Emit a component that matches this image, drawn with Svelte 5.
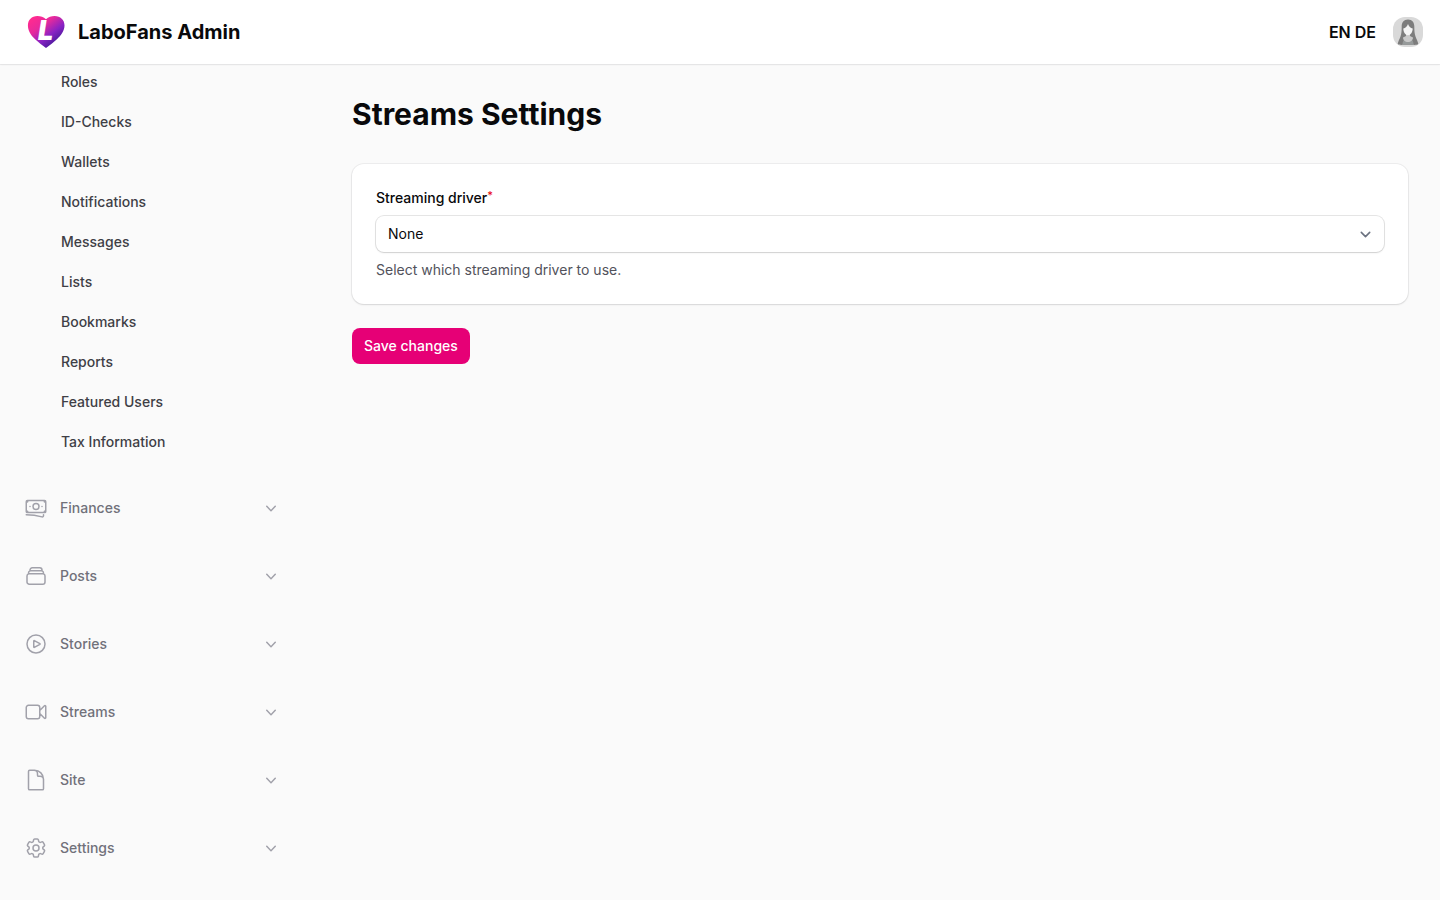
<script>
	let driver = $state('none');

	const userLinks = [
		'Roles',
		'ID-Checks',
		'Wallets',
		'Notifications',
		'Messages',
		'Lists',
		'Bookmarks',
		'Reports',
		'Featured Users',
		'Tax Information'
	];

	// outline icons on a 24x24 grid
	const groups = [
		{
			label: 'Finances',
			icon: 'M2.25 18.75a60.07 60.07 0 0 1 15.797 2.101c.727.198 1.453-.342 1.453-1.096V18.75M3.75 4.5v.75A.75.75 0 0 1 3 6h-.75m0 0v-.375c0-.621.504-1.125 1.125-1.125H20.25M2.25 6v9m18-10.5v.75c0 .414.336.75.75.75h.75m-1.5-1.5h.375c.621 0 1.125.504 1.125 1.125v9.75c0 .621-.504 1.125-1.125 1.125h-.375m1.5-1.5H21a.75.75 0 0 0-.75.75v.75m0 0H3.75m0 0h-.375a1.125 1.125 0 0 1-1.125-1.125V15m1.5 1.5v-.75A.75.75 0 0 0 3 15h-.75M15 10.5a3 3 0 1 1-6 0 3 3 0 0 1 6 0Zm3 0h.008v.008H18V10.5Zm-12 0h.008v.008H6V10.5Z'
		},
		{
			label: 'Posts',
			icon: 'M6 6.878V6a2.25 2.25 0 0 1 2.25-2.25h7.5A2.25 2.25 0 0 1 18 6v.878m-12 0c.235-.083.487-.128.75-.128h10.5c.263 0 .515.045.75.128m-12 0A2.25 2.25 0 0 0 4.5 9v.878m13.5-3A2.25 2.25 0 0 1 19.5 9v.878m0 0a2.246 2.246 0 0 0-.75-.128H5.25c-.263 0-.515.045-.75.128m15 0A2.25 2.25 0 0 1 21 12v6a2.25 2.25 0 0 1-2.25 2.25H5.25A2.25 2.25 0 0 1 3 18v-6c0-.98.626-1.813 1.5-2.122'
		},
		{
			label: 'Stories',
			icon: 'M21 12a9 9 0 1 1-18 0 9 9 0 0 1 18 0Z M15.91 11.672a.375.375 0 0 1 0 .656l-5.603 3.113a.375.375 0 0 1-.557-.328V8.887c0-.286.307-.466.557-.327l5.603 3.112Z'
		},
		{
			label: 'Streams',
			icon: 'm15.75 10.5 4.72-4.72a.75.75 0 0 1 1.28.53v11.38a.75.75 0 0 1-1.28.53l-4.72-4.72M4.5 18.75h9a2.25 2.25 0 0 0 2.25-2.25v-9a2.25 2.25 0 0 0-2.25-2.25h-9A2.25 2.25 0 0 0 2.25 7.5v9a2.25 2.25 0 0 0 2.25 2.25Z'
		},
		{
			label: 'Site',
			icon: 'M19.5 14.25v-2.625a3.375 3.375 0 0 0-3.375-3.375h-1.5A1.125 1.125 0 0 1 13.5 7.125v-1.5a3.375 3.375 0 0 0-3.375-3.375H8.25m2.25 0H5.625c-.621 0-1.125.504-1.125 1.125v17.25c0 .621.504 1.125 1.125 1.125h12.75c.621 0 1.125-.504 1.125-1.125V11.25a9 9 0 0 0-9-9Z'
		},
		{
			label: 'Settings',
			icon: 'M9.594 3.94c.09-.542.56-.94 1.11-.94h2.593c.55 0 1.02.398 1.11.94l.213 1.281c.063.374.313.686.645.87.074.04.147.083.22.127.325.196.72.257 1.075.124l1.217-.456a1.125 1.125 0 0 1 1.37.49l1.296 2.247a1.125 1.125 0 0 1-.26 1.431l-1.003.827c-.293.241-.438.613-.43.992a7.723 7.723 0 0 1 0 .255c-.008.378.137.75.43.991l1.004.827c.424.35.534.955.26 1.43l-1.298 2.247a1.125 1.125 0 0 1-1.369.491l-1.217-.456c-.355-.133-.75-.072-1.076.124a6.47 6.47 0 0 1-.22.128c-.331.183-.581.495-.644.869l-.213 1.281c-.09.543-.56.94-1.11.94h-2.594c-.55 0-1.019-.398-1.11-.94l-.213-1.281c-.062-.374-.312-.686-.644-.87a6.52 6.52 0 0 1-.22-.127c-.325-.196-.72-.257-1.076-.124l-1.217.456a1.125 1.125 0 0 1-1.369-.49l-1.297-2.247a1.125 1.125 0 0 1 .26-1.431l1.004-.827c.292-.24.437-.613.43-.991a6.932 6.932 0 0 1 0-.255c.007-.38-.138-.751-.43-.992l-1.004-.827a1.125 1.125 0 0 1-.26-1.43l1.297-2.247a1.125 1.125 0 0 1 1.37-.491l1.216.456c.356.133.751.072 1.076-.124.072-.044.146-.086.22-.128.332-.183.582-.495.644-.869l.214-1.28Z M15 12a3 3 0 1 1-6 0 3 3 0 0 1 6 0Z'
		}
	];
</script>

<header class="topbar">
	<a class="brand" href="#home">
		<svg class="logo" viewBox="0 0 38 34" aria-hidden="true">
			<defs>
				<linearGradient id="heart" x1="0.1" y1="0.1" x2="0.75" y2="0.85">
					<stop offset="0" stop-color="#ff2a90" />
					<stop offset="0.35" stop-color="#e62a9c" />
					<stop offset="0.7" stop-color="#8a22c4" />
					<stop offset="1" stop-color="#4a1a9c" />
				</linearGradient>
			</defs>
			<path
				fill="url(#heart)"
				d="M19 4.2C16.6 1.6 13.6.9 10.4.9 4.6.9.9 4.8.9 10.3c0 5.2 2.5 9.6 7.2 14 3.3 3 7 5.9 10.9 8.7 3.9-2.8 7.6-5.7 10.9-8.7 4.7-4.4 7.6-8.8 7.6-14C37.5 4.8 33.4.9 27.6.9 24.4.9 21.4 1.6 19 4.2Z"
			/>
			<text class="logo-letter" x="11" y="25">L</text>
		</svg>
		<span>LaboFans Admin</span>
	</a>
	<div class="user-area">
		<nav class="languages" aria-label="Language">
			<a href="#en">EN</a>
			<a href="#de">DE</a>
		</nav>
		<button class="avatar" type="button" aria-label="User menu">
			<svg viewBox="0 0 32 32" aria-hidden="true">
				<rect x="1" y="1" width="30" height="30" rx="12" fill="#d9d9d9" />
				<path
					fill="#7d7d7d"
					d="M16 3.5c-4.3 0-6.3 3-6.3 7 0 4-.2 7-1.2 10-1 2.6-2.4 5-2.8 7.5 1.2.9 3.4 1.1 5.3.8h10c1.9.3 4.1.1 5.3-.8-.4-2.5-1.8-4.9-2.8-7.5-1-3-1.2-6-1.2-10 0-4-2-7-6.3-7Z"
				/>
				<path fill="#969a9a" d="M10.5 28.8c0-3 1-5.8 3.5-6.5h4c2.5.7 3.5 3.5 3.5 6.5Z" />
				<path fill="#c9c9c9" d="M14 18h4v2l3 1.5c0 2.6-2.1 4.5-5 4.500s-5-1.900-5-4.500l3-1.500Z" />
				<path
					fill="#f4f4f4"
					d="M11.300 12.500c2.300-.5 3.700-2 4.700-4.500 1 2.500 2.400 4 4.700 4.500 0 3.600-2.100 6.700-4.700 6.700s-4.700-3.100-4.700-6.700Z"
				/>
			</svg>
		</button>
	</div>
</header>

<div class="layout">
	<aside class="sidebar">
		<ul class="links">
			{#each userLinks as link}
				<li><a href="#{link.toLowerCase().replace(' ', '-')}">{link}</a></li>
			{/each}
		</ul>
		{#each groups as group}
			<button class="group" type="button" aria-expanded="false">
				<svg class="group-icon" viewBox="0 0 24 24" aria-hidden="true">
					<path d={group.icon} />
				</svg>
				<span>{group.label}</span>
				<svg class="chevron" viewBox="0 0 20 20" aria-hidden="true">
					<path
						d="M5.23 7.71a.75.75 0 0 1 1.06.02L10 11.668l3.71-3.938a.75.75 0 1 1 1.08 1.04l-4.25 4.5a.75.75 0 0 1-1.08 0l-4.25-4.5a.75.75 0 0 1 .02-1.06Z"
					/>
				</svg>
			</button>
		{/each}
	</aside>

	<main>
		<h1>Streams Settings</h1>
		<form onsubmit={(event) => event.preventDefault()}>
			<section class="card">
				<label for="driver">Streaming driver<sup>*</sup></label>
				<div class="select-wrap">
					<select id="driver" bind:value={driver} aria-describedby="driver-help" required>
						<option value="none">None</option>
					</select>
					<svg class="select-arrow" viewBox="0 0 20 20" aria-hidden="true">
						<path d="m6 8 4 4 4-4" />
					</svg>
				</div>
				<p id="driver-help">Select which streaming driver to use.</p>
			</section>
			<button class="save" type="submit">Save changes</button>
		</form>
	</main>
</div>

<style>
	:global(body) {
		background: #fafafa;
		color: #09090b;
		font-family: Inter, sans-serif;
		font-size: 14px;
		line-height: 20px;
	}

	a {
		color: inherit;
		text-decoration: none;
	}

	button,
	select {
		font: inherit;
		cursor: pointer;
	}

	svg {
		display: block;
		flex: none;
	}

	/* Top bar */
	.topbar {
		position: sticky;
		top: 0;
		z-index: 1;
		display: flex;
		align-items: center;
		justify-content: space-between;
		box-sizing: border-box;
		height: 64px;
		padding: 0 16px 0 27px;
		background: #fff;
		box-shadow:
			0 0 0 1px rgba(9, 9, 11, 0.05),
			0 1px 2px rgba(0, 0, 0, 0.05);
	}

	.brand {
		display: flex;
		align-items: center;
		gap: 13px;
		font-size: 20px;
		font-weight: 700;
		line-height: 28px;
	}

	.logo {
		width: 38px;
		height: 34px;
	}

	.logo-letter {
		fill: #fff;
		font-family: Inter, sans-serif;
		font-size: 27px;
		font-style: italic;
		font-weight: 900;
	}

	.user-area {
		display: flex;
		align-items: center;
		gap: 16px;
	}

	.languages {
		display: flex;
		gap: 4px;
		font-size: 16px;
		font-weight: 600;
		line-height: 24px;
	}

	.avatar {
		padding: 0;
		border: 0;
		background: none;
	}

	.avatar svg {
		width: 32px;
		height: 32px;
	}

	/* Sidebar */
	.layout {
		display: flex;
		align-items: flex-start;
	}

	.sidebar {
		display: flex;
		flex: none;
		flex-direction: column;
		gap: 28px;
		box-sizing: border-box;
		width: 320px;
		padding: 0 39px 32px 24px;
		font-weight: 500;
	}

	.links {
		display: flex;
		flex-direction: column;
		gap: 4px;
		margin: 0;
		padding: 0;
		list-style: none;
	}

	.links a {
		display: block;
		padding: 8px 8px 8px 37px;
		color: #3f3f46;
	}

	.group {
		display: flex;
		align-items: center;
		gap: 12px;
		padding: 8px 0;
		border: 0;
		background: none;
		color: #71717a;
		text-align: left;
	}

	.group span {
		flex: 1;
	}

	.group-icon {
		width: 24px;
		height: 24px;
		fill: none;
		stroke: #a1a1aa;
		stroke-width: 1.5;
		stroke-linecap: round;
		stroke-linejoin: round;
	}

	.chevron {
		width: 20px;
		height: 20px;
		fill: #a1a1aa;
	}

	/* Page */
	main {
		flex: 1;
		min-width: 0;
		padding: 32px;
	}

	h1 {
		margin: 0 0 32px;
		font-size: 30px;
		font-weight: 700;
		line-height: 36px;
	}

	form {
		display: flex;
		flex-direction: column;
		align-items: flex-start;
		gap: 24px;
	}

	.card {
		display: flex;
		flex-direction: column;
		gap: 8px;
		box-sizing: border-box;
		width: 100%;
		padding: 24px;
		border-radius: 12px;
		background: #fff;
		box-shadow:
			0 0 0 1px rgba(9, 9, 11, 0.05),
			0 1px 2px rgba(0, 0, 0, 0.1);
	}

	label {
		font-weight: 500;
	}

	sup {
		color: #e7000b;
		font-size: 11px;
		line-height: 0;
		vertical-align: 4px;
	}

	.select-wrap {
		position: relative;
		display: flex;
	}

	select {
		flex: 1;
		height: 36px;
		padding: 0 36px 0 12px;
		border: 0;
		border-radius: 8px;
		appearance: none;
		background: #fff;
		box-shadow:
			0 0 0 1px rgba(9, 9, 11, 0.1),
			0 1px 2px rgba(0, 0, 0, 0.1);
		color: #09090b;
	}

	.select-arrow {
		position: absolute;
		top: 8px;
		right: 8px;
		width: 21px;
		height: 21px;
		fill: none;
		stroke: #6b7280;
		stroke-width: 1.5;
		stroke-linecap: round;
		stroke-linejoin: round;
		pointer-events: none;
	}

	p {
		margin: 0;
		color: #52525b;
	}

	.save {
		padding: 8px 12px;
		border: 0;
		border-radius: 8px;
		background: #e60076;
		color: #fff;
		font-weight: 500;
	}
</style>
